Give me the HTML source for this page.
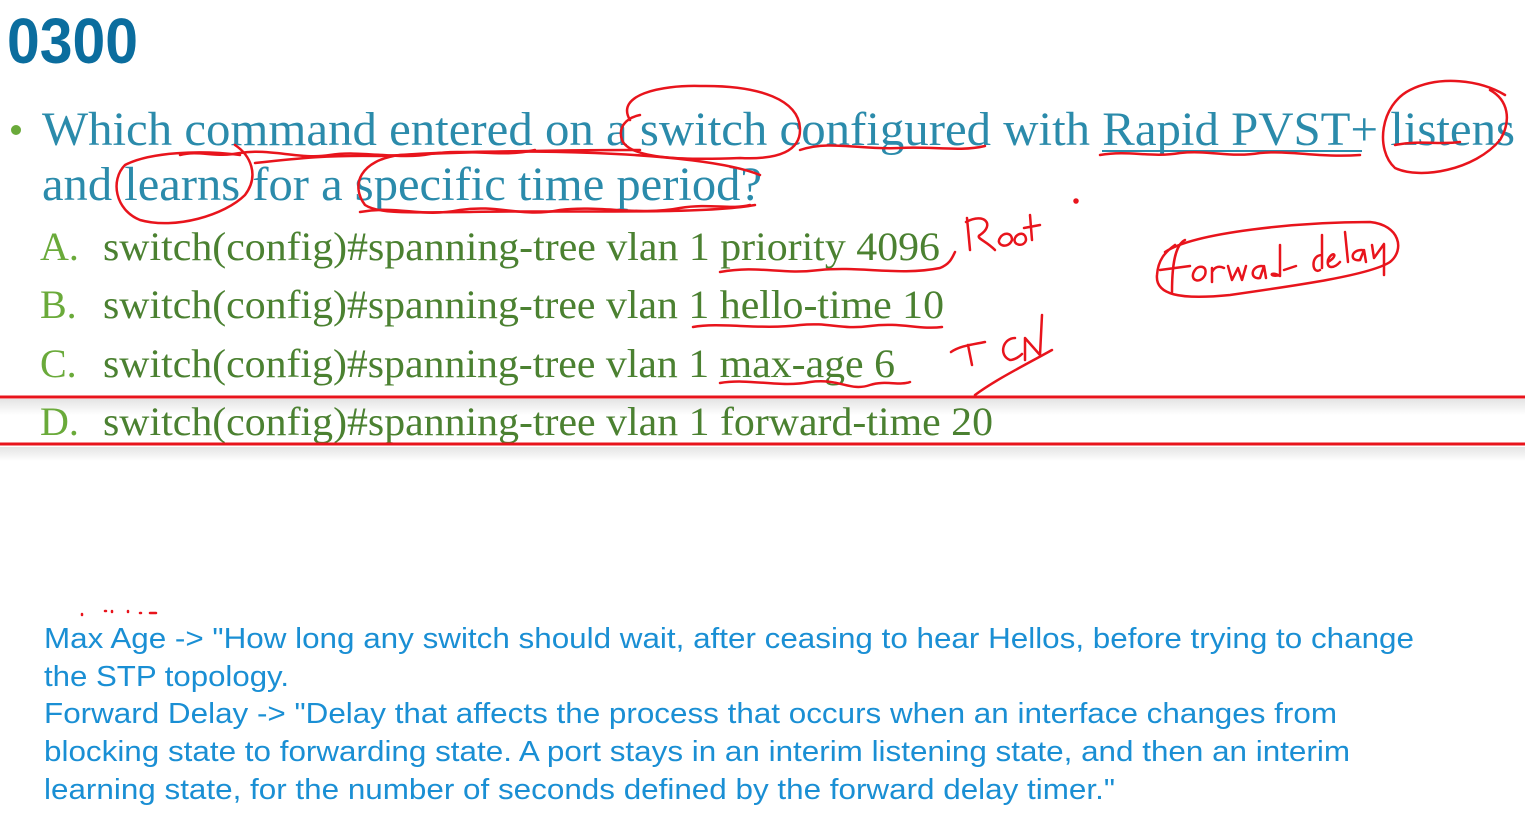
<!DOCTYPE html>
<html><head><meta charset="utf-8"><style>
html,body{margin:0;padding:0;background:#fff;width:1525px;height:822px;overflow:hidden}
svg{display:block}
</style></head><body>
<svg width="1525" height="822" viewBox="0 0 1525 822" xmlns="http://www.w3.org/2000/svg">
<defs>
<linearGradient id="sh" x1="0" y1="0" x2="0" y2="1"><stop offset="0" stop-color="#e4e4e4"/><stop offset="1" stop-color="#fff"/></linearGradient>
</defs>
<text x="7" y="63" font-family="Liberation Sans, sans-serif" font-weight="bold" font-size="64" fill="#0b6d9e" textLength="131" lengthAdjust="spacingAndGlyphs">0300</text>
<circle cx="16" cy="130" r="5" fill="#6aaa3a"/>
<g font-family="Liberation Serif, serif" font-size="48" fill="#2b8bab">
<text x="42" y="145" textLength="1473" lengthAdjust="spacingAndGlyphs">Which command entered on a switch configured with Rapid PVST+ listens</text>
<text x="42" y="200" textLength="720" lengthAdjust="spacingAndGlyphs">and learns for a specific time period?</text>
</g>
<line x1="1102" y1="151" x2="1362" y2="151" stroke="#2b8bab" stroke-width="2"/>
<rect x="0" y="399" width="1525" height="16" fill="url(#sh)"/>
<rect x="0" y="447" width="1525" height="14" fill="url(#sh)"/>
<g font-family="Liberation Serif, serif" font-size="40">
<text x="40" y="260" fill="#6aaa3a">A.</text>
<text x="103" y="260" fill="#4b8131" textLength="837" lengthAdjust="spacingAndGlyphs">switch(config)#spanning-tree vlan 1 priority 4096</text>
<text x="40" y="318" fill="#6aaa3a">B.</text>
<text x="103" y="318" fill="#4b8131" textLength="841" lengthAdjust="spacingAndGlyphs">switch(config)#spanning-tree vlan 1 hello-time 10</text>
<text x="40" y="377" fill="#6aaa3a">C.</text>
<text x="103" y="377" fill="#4b8131" textLength="792" lengthAdjust="spacingAndGlyphs">switch(config)#spanning-tree vlan 1 max-age 6</text>
<text x="40" y="435" fill="#6aaa3a">D.</text>
<text x="103" y="435" fill="#4b8131" textLength="890" lengthAdjust="spacingAndGlyphs">switch(config)#spanning-tree vlan 1 forward-time 20</text>
</g>
<line x1="0" y1="397" x2="1525" y2="397" stroke="#e8141c" stroke-width="3"/>
<line x1="0" y1="444" x2="1525" y2="444" stroke="#e8141c" stroke-width="3"/>
<g font-family="Liberation Sans, sans-serif" font-size="28.5" fill="#1a8fd4">
<text x="44" y="648" textLength="1370" lengthAdjust="spacingAndGlyphs">Max Age -&gt; "How long any switch should wait, after ceasing to hear Hellos, before trying to change</text>
<text x="44" y="686" textLength="245" lengthAdjust="spacingAndGlyphs">the STP topology.</text>
<text x="44" y="723" textLength="1293" lengthAdjust="spacingAndGlyphs">Forward Delay -&gt; "Delay that affects the process that occurs when an interface changes from</text>
<text x="44" y="761" textLength="1306" lengthAdjust="spacingAndGlyphs">blocking state to forwarding state. A port stays in an interim listening state, and then an interim</text>
<text x="44" y="799" textLength="1071" lengthAdjust="spacingAndGlyphs">learning state, for the number of seconds defined by the forward delay timer."</text>
</g>
<g fill="none" stroke="#e8141c" stroke-width="2.5" stroke-linecap="round" stroke-linejoin="round">
<!-- circle switch -->
<path d="M630 120 C615 95 660 85 700 86 C760 85 800 100 800 130 C800 150 780 160 740 158 C690 160 630 160 622 140 C618 128 625 118 640 115"/>
<!-- circle listens -->
<path d="M1505 95 C1480 80 1440 75 1410 90 C1380 105 1375 150 1395 168 C1420 180 1475 170 1500 140 C1512 120 1508 100 1490 90"/>
<!-- circle learns -->
<path d="M240 155 C200 150 150 152 125 165 C110 180 115 210 140 220 C175 230 225 215 245 195 C260 175 250 155 235 145"/>
<!-- circle specific time period -->
<path d="M760 175 C700 150 500 148 400 155 C360 160 350 185 365 205 C380 215 420 212 470 212 C560 210 700 215 755 205"/>
<!-- wavy lines -->
<path d="M180 155 C200 150 215 158 240 153 C270 148 300 160 330 155 C360 150 400 160 430 154 C470 148 500 158 535 150"/>
<path d="M255 163 C300 158 330 155 380 156 C460 152 560 150 640 150"/>
<path d="M800 150 C830 140 860 150 900 148 C930 146 960 152 985 146"/>
<path d="M1100 155 C1130 150 1150 158 1180 153 C1210 150 1230 158 1260 153 C1290 150 1320 158 1360 155"/>
<path d="M1395 145 C1420 140 1440 145 1460 142"/>
<path d="M360 212 C400 205 420 218 460 210 C500 204 520 218 560 210 C600 205 640 216 680 208 C710 203 730 210 750 205"/>
<path d="M720 272 C760 265 780 275 820 270 C860 266 900 276 940 268 C950 264 952 258 955 252"/>
<path d="M693 327 C720 322 760 330 800 325 C830 322 840 330 870 326 C900 322 920 330 942 327"/>
<path d="M720 383 C750 378 780 388 810 382 C840 378 850 392 870 385 C885 380 900 386 910 382"/>
<!-- Root -->
<path d="M967 218 L970 250 M966 222 C985 212 995 225 980 235 C975 238 985 240 995 250"/>
<path d="M1000 238 C995 245 1008 250 1012 240 C1012 232 1003 232 1000 238 M1015 238 C1012 245 1024 248 1026 240 C1026 232 1018 232 1015 238 M1030 215 L1032 240 M1024 228 L1040 225"/>
<circle cx="1076" cy="201" r="1.5" fill="#e8141c"/>
<!-- TCN -->
<path d="M951 352 C960 346 970 345 985 342 M968 345 L972 365"/>
<path d="M1015 338 C1003 338 998 355 1010 360 C1015 360 1020 356 1022 354"/>
<path d="M1025 360 L1025 338 L1040 355 L1042 315"/>
<path d="M975 395 C995 380 1025 365 1052 350"/>
<!-- Forward delay -->
<path d="M1165 252 C1195 232 1300 222 1370 222 C1400 225 1405 250 1390 262 C1370 275 1300 285 1230 295 C1180 300 1155 295 1157 275 C1158 260 1165 252 1175 245"/>
<path d="M1185 240 C1175 245 1172 265 1172 292 M1160 270 L1190 266"/>
<path d="M1195 270 C1188 280 1200 285 1205 275 C1208 265 1198 265 1195 270 M1212 268 L1212 282 M1212 272 C1215 266 1220 266 1224 268 M1228 266 L1232 280 L1238 268 L1242 280 L1246 266 M1262 266 C1250 266 1250 280 1260 278 L1264 266 L1266 278 M1280 245 L1280 276 C1270 270 1268 278 1280 275 M1284 270 L1296 266"/>
<path d="M1322 255 C1310 255 1312 275 1320 270 M1322 235 L1322 268 M1328 262 C1340 255 1332 250 1328 260 C1326 270 1335 268 1340 262 M1345 232 L1348 262 M1362 250 C1350 250 1350 262 1360 260 L1364 250 L1366 262 M1372 245 L1374 258 L1384 244 L1384 275"/>
<!-- dots -->
<path d="M82 614 l0 1 M105 611 l1 0 M112 611 l0 1 M128 611 l0 1 M140 613 l1 0 M150 613 l6 0"/>
</g>
</svg>
</body></html>
